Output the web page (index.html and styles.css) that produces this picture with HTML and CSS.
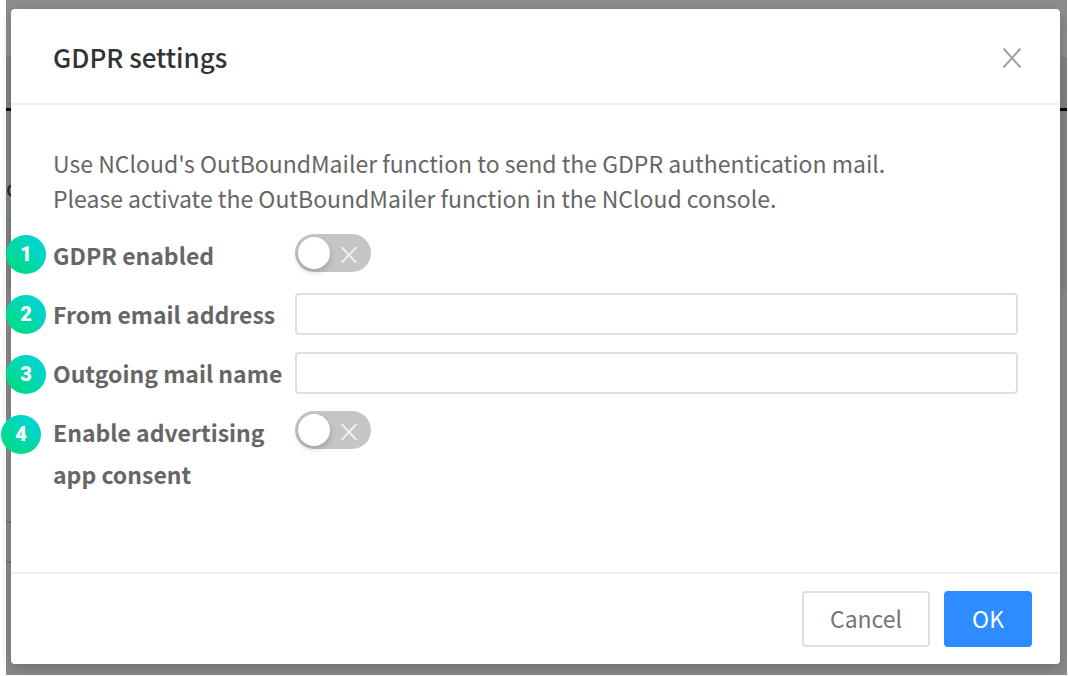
FILE: index.html
```html
<!DOCTYPE html>
<html lang="en">
<head>
<meta charset="utf-8">
<meta name="viewport" content="width=device-width, initial-scale=1">
<title>GDPR settings</title>
<link rel="stylesheet" href="styles.css">
</head>
<body>
<div class="backdrop">
  <div class="behind" aria-hidden="true">
    <div class="behind-header"></div>
    <div class="behind-rule"></div>
    <div class="behind-panel">
      <div class="behind-field">c</div>
    </div>
    <div class="behind-table"></div>
  </div>
  <form class="modal" role="dialog" aria-labelledby="title">
    <header class="modal-header">
      <h1 class="modal-title" id="title">GDPR settings</h1>
      <button class="close" type="button" aria-label="Close">
        <svg class="close-icon" viewBox="0 0 20 20"><path d="M1.500 .5 18.500 19.500M18.500 .5 1.500 19.500"/></svg>
      </button>
    </header>
    <div class="modal-body">
      <p class="intro">Use NCloud's OutBoundMailer function to send the GDPR authentication mail.<br>Please activate the OutBoundMailer function in the NCloud console.</p>
      <div class="row">
        <label class="label" for="gdpr">GDPR enabled</label>
        <span class="switch">
          <input class="switch-input" type="checkbox" id="gdpr">
          <svg class="switch-icon" viewBox="0 0 16 16" aria-hidden="true"><path d="M.5 0 15.500 16M15.500 0 .5 16"/></svg>
        </span>
      </div>
      <div class="row">
        <label class="label" for="from">From email address</label>
        <input class="text-input" type="text" id="from">
      </div>
      <div class="row">
        <label class="label" for="name">Outgoing mail name</label>
        <input class="text-input" type="text" id="name">
      </div>
      <div class="row">
        <label class="label" for="consent">Enable advertising app consent</label>
        <span class="switch">
          <input class="switch-input" type="checkbox" id="consent">
          <svg class="switch-icon" viewBox="0 0 16 16" aria-hidden="true"><path d="M.5 0 15.500 16M15.500 0 .5 16"/></svg>
        </span>
      </div>
    </div>
    <footer class="modal-footer">
      <button class="button" type="button">Cancel</button>
      <button class="button button-primary" type="submit">OK</button>
    </footer>
  </form>
  <div class="markers">
    <span class="marker">1</span>
    <span class="marker">2</span>
    <span class="marker">3</span>
    <span class="marker marker-outer">4</span>
  </div>
</div>
</body>
</html>
```

FILE: styles.css
```css
* {
  box-sizing: border-box;
}

body {
  margin: 0;
  padding: 0 1px 1px 6px;
  background: #fff;
  color: #666;
  font-family: "Noto Sans CJK KR", "Noto Sans", sans-serif;
  font-size: 23px;
  line-height: 35px;
}

.backdrop {
  position: relative;
  padding: 9px 7px 11px 5px;
  background: #8a8a8a;
}

/* Slivers of the dimmed page visible around the dialog */
.behind {
  position: absolute;
  inset: 0;
  overflow: hidden;
}

.behind-header {
  height: 108px;
  background: linear-gradient(#8b8e8c 57px, #808281 57px);
}

.behind-rule {
  height: 3px;
  background: #000;
}

.behind-panel {
  height: 178px;
  padding-top: 43px;
  background: #828486;
}

.behind-field {
  width: 50%;
  height: 66px;
  border-top: 1px solid #4f7e9b;
  border-bottom: 1px solid #4f7e9b;
  background: #7f888d;
  color: #222;
  line-height: 64px;
}

.behind-table {
  width: 50%;
  height: 42px;
  margin-top: 232px;
  border-top: 2px solid #737373;
  border-bottom: 2px solid #737373;
}

.modal {
  position: relative;
  border-radius: 4px;
  background: #fff;
  box-shadow: 0 4px 14px rgba(0, 0, 0, .2);
}

.modal-header {
  display: flex;
  align-items: center;
  justify-content: space-between;
  padding: 30px 38px 29px 42px;
  border-bottom: 2px solid #f0f0f0;
}

.modal-title {
  margin: 0;
  color: #333;
  font-size: 26px;
  font-weight: 500;
  line-height: 35px;
}

.close {
  display: flex;
  padding: 2px 0 0;
  border: 0;
  background: none;
}

.close-icon {
  width: 20px;
  height: 20px;
  fill: none;
  stroke: #a0a0a0;
  stroke-width: 2;
}

.modal-body {
  display: flex;
  flex-direction: column;
  gap: 17px;
  padding: 41px 42px 77px;
}

.intro {
  margin: 0 0 1px;
}

.row {
  display: grid;
  grid-template-columns: 242px 1fr;
  align-items: start;
}

.label {
  font-weight: 700;
  line-height: 42px;
}

.text-input {
  width: 100%;
  height: 42px;
  padding: 0 12px;
  border: 2px solid #dfdfdf;
  border-radius: 4px;
  background: #fff;
  color: inherit;
  font: inherit;
}

.switch {
  position: relative;
  display: flex;
  width: 76px;
  height: 38px;
}

.switch-input {
  display: flex;
  align-items: center;
  width: 100%;
  height: 100%;
  margin: 0;
  padding: 3px;
  border-radius: 19px;
  background: #c5c5c5;
  appearance: none;
}

.switch-input::before {
  width: 32px;
  height: 32px;
  border-radius: 50%;
  background: #fff;
  box-shadow: 0 3px 6px rgba(0, 0, 0, .2);
  content: "";
}

.switch-input:checked {
  justify-content: flex-end;
  background: #2d8cff;
}

.switch-icon {
  position: absolute;
  top: 13px;
  right: 14px;
  width: 16px;
  height: 16px;
  fill: none;
  stroke: #f0f0f0;
  stroke-width: 2;
  pointer-events: none;
}

.switch-input:checked + .switch-icon {
  display: none;
}

.modal-footer {
  display: flex;
  justify-content: flex-end;
  gap: 14px;
  padding: 17px 28px;
  border-top: 2px solid #f0f0f0;
}

.button {
  height: 56px;
  padding: 0 26px 2px;
  border: 2px solid #dfdfdf;
  border-radius: 4px;
  background: #fff;
  color: #757575;
  font: inherit;
}

.button-primary {
  border-color: #2d8cff;
  background: #2d8cff;
  color: #fff;
}

/* Numbered callouts pinned over the dialog's left edge */
.markers {
  position: absolute;
  top: 235px;
  left: 0;
  display: flex;
  flex-direction: column;
  gap: 21px;
}

.marker {
  width: 40px;
  height: 39px;
  border-radius: 50%;
  background: linear-gradient(45deg, #00dc82 15%, #00d5cc 75%);
  color: #fff;
  font-family: Roboto, "Liberation Sans", sans-serif;
  font-size: 20px;
  font-weight: 900;
  line-height: 39px;
  text-align: center;
}

.marker-outer {
  margin-left: -5px;
}
```
